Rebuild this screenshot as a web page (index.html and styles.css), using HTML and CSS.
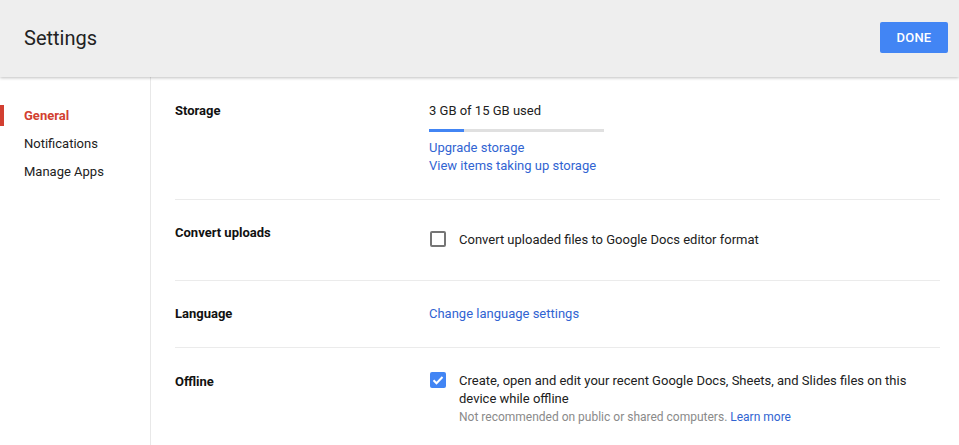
FILE: index.html
```html
<!DOCTYPE html>
<html lang="en">
<head>
<meta charset="utf-8">
<title>Settings</title>
<link rel="stylesheet" href="styles.css">
</head>
<body>
<header class="topbar">
  <h1 class="title">Settings</h1>
  <button class="btn-done" type="button">DONE</button>
</header>
<div class="layout">
  <nav class="sidenav">
    <a class="nav-item active" href="#">General</a>
    <a class="nav-item" href="#">Notifications</a>
    <a class="nav-item" href="#">Manage Apps</a>
  </nav>
  <main class="content">
    <section class="row row-storage">
      <div class="label">Storage</div>
      <div class="value">
        <div class="usage">3 GB of 15 GB used</div>
        <div class="meter"><div class="meter-fill" style="width: 20%"></div></div>
        <div class="links">
          <a href="#">Upgrade storage</a>
          <a href="#">View items taking up storage</a>
        </div>
      </div>
    </section>
    <section class="row row-convert">
      <div class="label">Convert uploads</div>
      <div class="value">
        <label class="check">
          <span class="box"></span>
          <span class="check-text">Convert uploaded files to Google Docs editor format</span>
        </label>
      </div>
    </section>
    <section class="row row-language">
      <div class="label">Language</div>
      <div class="value"><a href="#">Change language settings</a></div>
    </section>
    <section class="row row-offline">
      <div class="label">Offline</div>
      <div class="value">
        <label class="check">
          <span class="box checked">
            <svg viewBox="0 0 16 16" width="16" height="16"><path d="M3.5 8.2l3 3 6-6.2" fill="none" stroke="#fff" stroke-width="2"/></svg>
          </span>
          <span class="check-text">Create, open and edit your recent Google Docs, Sheets, and Slides files on this device while offline
            <span class="note">Not recommended on public or shared computers. <a href="#">Learn more</a></span>
          </span>
        </label>
      </div>
    </section>
  </main>
</div>
</body>
</html>
```

FILE: styles.css
```css
* { box-sizing: border-box; }

html, body {
  margin: 0;
  height: 100%;
}

body {
  font-family: Roboto, "Noto Sans", Arial, sans-serif;
  font-size: 13px;
  color: #212121;
  background: #fff;
  overflow: hidden;
}

a {
  color: #3164d2;
  text-decoration: none;
}

/* top bar */
.topbar {
  position: relative;
  z-index: 2;
  height: 77px;
  background: #eeeeee;
  box-shadow: 0 1px 3px rgba(0, 0, 0, 0.25);
  display: flex;
  align-items: flex-start;
  justify-content: space-between;
  padding: 0 11px 0 24px;
}

.title {
  margin: 25px 0 0;
  font-size: 20px;
  font-weight: 400;
  line-height: 26px;
  color: #222;
}

.btn-done {
  margin-top: 22px;
  width: 68px;
  height: 31px;
  border: 0;
  border-radius: 2px;
  background: #4285f4;
  color: #fff;
  font-family: inherit;
  font-size: 13px;
  font-weight: 500;
  letter-spacing: 0.2px;
  padding: 0;
}

/* body layout */
.layout {
  display: flex;
  height: calc(100% - 77px);
}

.sidenav {
  width: 151px;
  flex: none;
  border-right: 1px solid #e8e8e8;
  padding-top: 25px;
  display: flex;
  flex-direction: column;
}

.nav-item {
  position: relative;
  display: block;
  line-height: 28px;
  padding-left: 24px;
  color: #212121;
}

.nav-item.active {
  color: #d23f31;
  font-weight: 700;
}

.nav-item.active::before {
  content: "";
  position: absolute;
  left: 0;
  top: 3px;
  width: 4px;
  height: 21px;
  background: #d23f31;
}

.content {
  flex: 1;
  padding: 0 19px 0 24px;
}

.row {
  display: grid;
  grid-template-columns: 254px 1fr;
  border-bottom: 1px solid #ebebeb;
}

.label {
  font-weight: 700;
  line-height: 16px;
  color: #111;
}

.value {
  line-height: 18px;
}

/* storage */
.row-storage { padding: 26px 0 24px; }
.usage { line-height: 16px; }

.meter {
  width: 175px;
  height: 3px;
  margin-top: 10px;
  background: #e0e0e0;
}

.meter-fill {
  height: 100%;
  background: #4285f4;
}

.links {
  margin-top: 7px;
  display: flex;
  flex-direction: column;
}

/* convert */
.row-convert { padding: 25px 0 0; height: 81px; }
.row-convert .value { margin-top: 6px; }
.row-convert .box { margin-top: 0; }

/* language */
.row-language { padding: 25px 0 0; height: 67px; }
.row-language .value { line-height: 16px; }

/* offline */
.row-offline { padding: 26px 0 0; border-bottom: 0; }
.row-offline .value { margin-top: -2px; }

.check {
  display: flex;
  align-items: flex-start;
}

.box {
  flex: none;
  width: 16px;
  height: 16px;
  margin: 1px 13px 0 1px;
  border: 2px solid #757575;
  border-radius: 2px;
  display: flex;
  align-items: center;
  justify-content: center;
}

.box.checked {
  border: 0;
  background: #4285f4;
  margin-top: 0;
}

.check-text {
  color: #212121;
}

.note {
  display: block;
  font-size: 12px;
  line-height: 16px;
  color: #8a8a8a;
  margin-top: 1px;
}
```
